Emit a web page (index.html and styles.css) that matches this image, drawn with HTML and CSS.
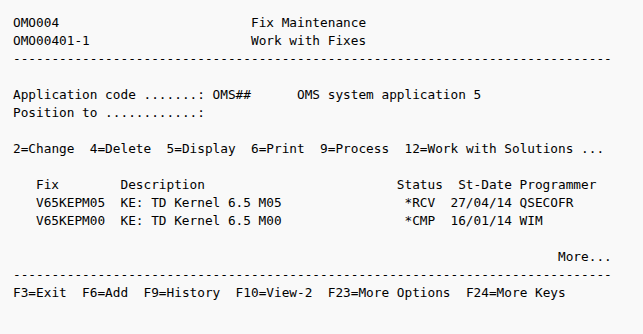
FILE: index.html
```html
<!DOCTYPE html>
<html>
<head>
<meta charset="utf-8">
<link rel="stylesheet" href="styles.css">
</head>
<body>
<div class="screen">
  <div class="head">
    <span>OMO004</span><span>Fix Maintenance</span>
    <span>OMO00401-1</span><span>Work with Fixes</span>
  </div>
  <div class="rule">------------------------------------------------------------------------------</div>
  <div class="blank"></div>
  <div class="line">Application code .......: OMS##      OMS system application 5</div>
  <div class="line">Position to ............:</div>
  <div class="blank"></div>
  <div class="line">2=Change  4=Delete  5=Display  6=Print  9=Process  12=Work with Solutions ...</div>
  <div class="blank"></div>
  <div class="table">
    <span>Fix</span><span>Description</span><span>Status</span><span class="sp">St-Date</span><span>Programmer</span>
    <span>V65KEPM05</span><span>KE: TD Kernel 6.5 M05</span><span class="sp">*RCV</span><span>27/04/14</span><span>QSECOFR</span>
    <span>V65KEPM00</span><span>KE: TD Kernel 6.5 M00</span><span class="sp">*CMP</span><span>16/01/14</span><span>WIM</span>
  </div>
  <div class="blank"></div>
  <div class="more">More...</div>
  <div class="rule">------------------------------------------------------------------------------</div>
  <div class="line">F3=Exit  F6=Add  F9=History  F10=View-2  F23=More Options  F24=More Keys</div>
</div>
</body>
</html>
```
FILE: styles.css
```css
html, body {
  margin: 0;
  padding: 0;
  background: #f9f9f9;
}
.screen {
  padding: 14px 0 0 13px;
  font-family: "DejaVu Sans Mono", "Liberation Mono", monospace;
  font-size: 12.76px;
  line-height: 18px;
  color: #000;
  width: 78ch;
}
.screen > div {
  white-space: pre;
}
.head {
  display: grid;
  grid-template-columns: 31ch auto;
}
.rule, .line, .more, .blank {
  height: 18px;
}
.head span, .table span {
  height: 18px;
}
.more {
  text-align: right;
}
.table {
  display: grid;
  grid-template-columns: 11ch 36ch 7ch 9ch auto;
  padding-left: 3ch;
}
.table .sp {
  padding-left: 1ch;
}
```
